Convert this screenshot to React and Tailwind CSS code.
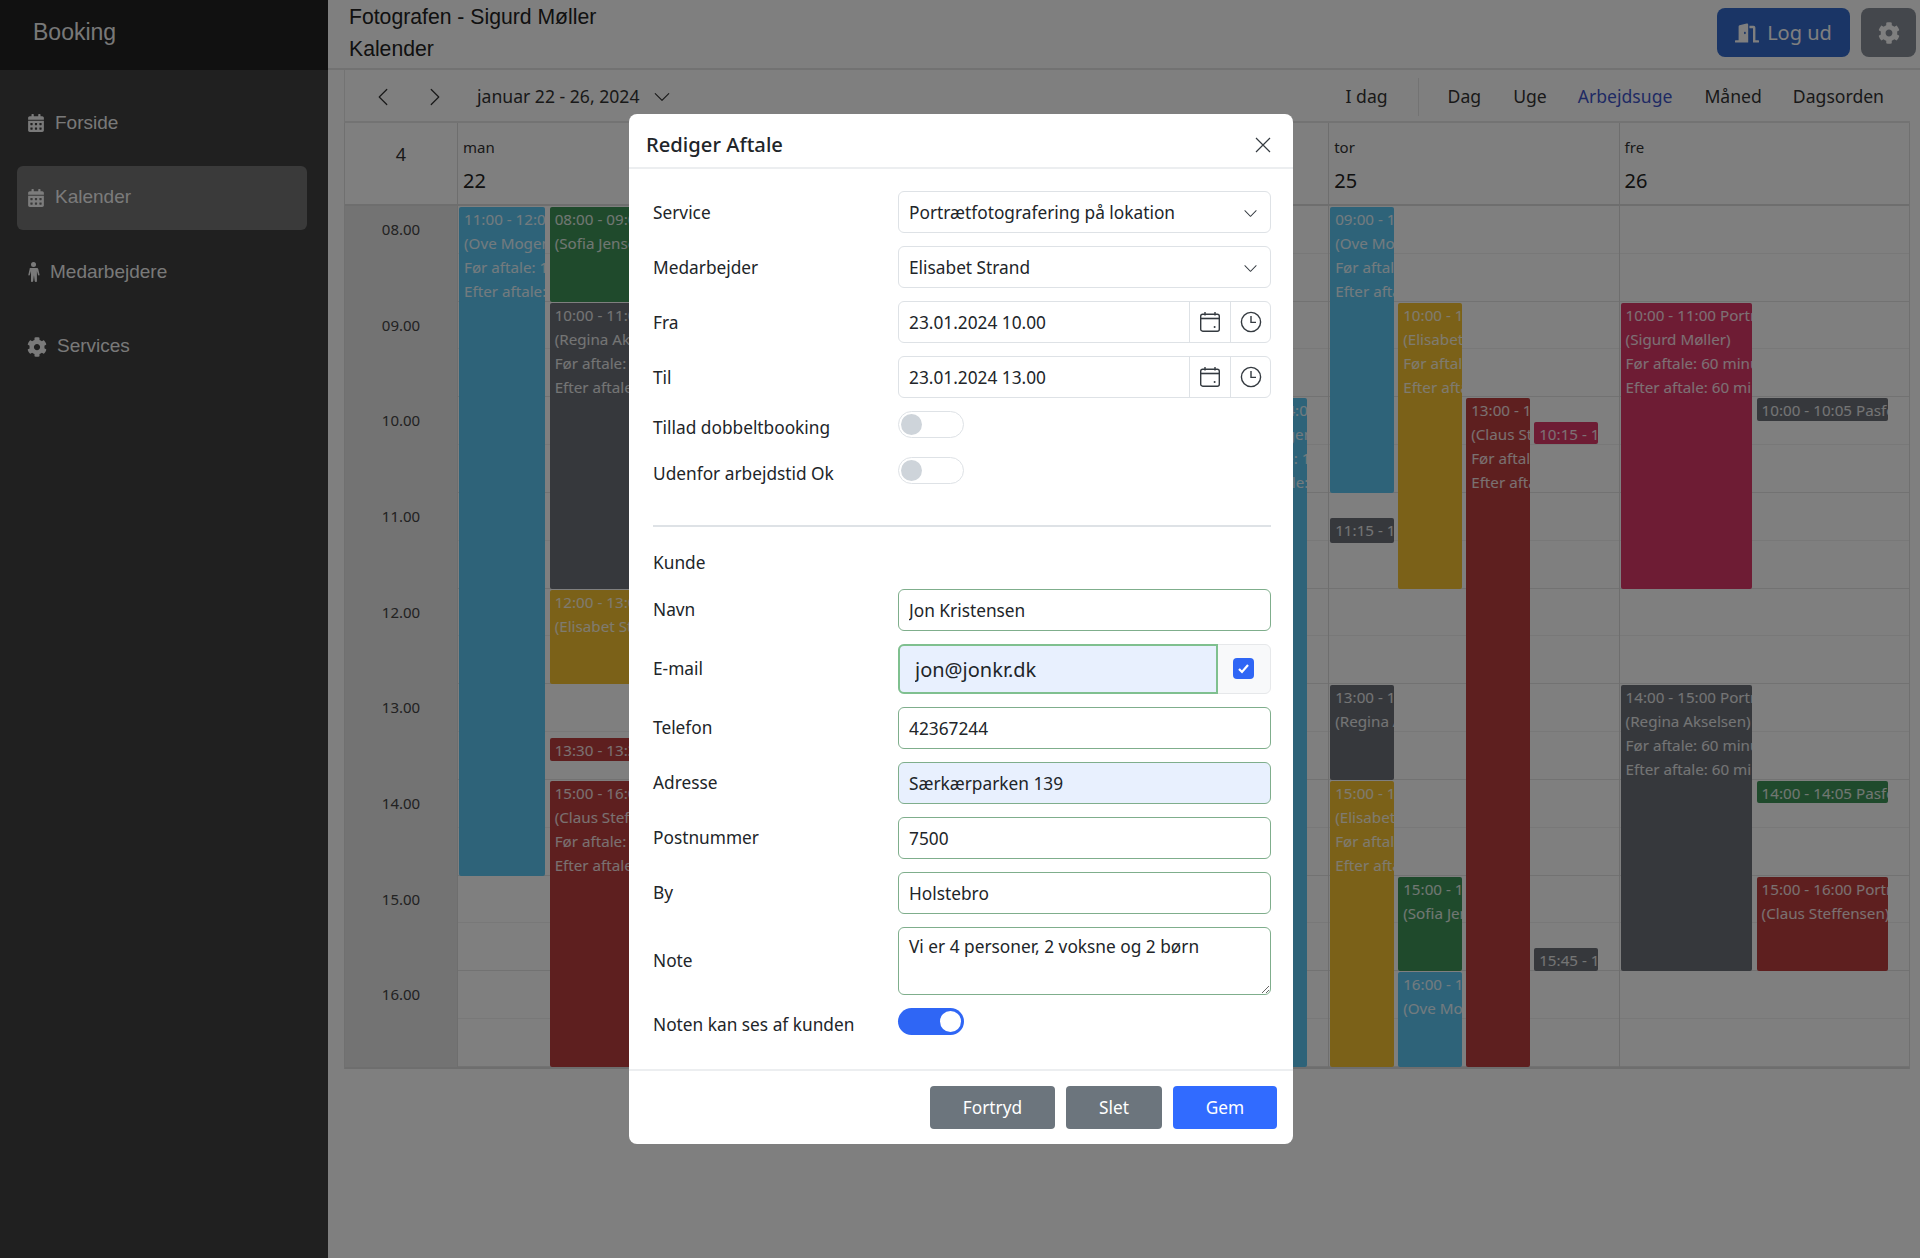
import React from "react";
import { FaCalendarAlt, FaCog, FaDoorOpen } from "react-icons/fa";
import { BsChevronLeft, BsChevronRight, BsChevronDown } from "react-icons/bs";

const HOUR = 95.67;
const blue = "bg-[#5cc6f2]";
const green = "bg-[#3e9458]";
const dark = "bg-[#6c7078]";
const yellow = "bg-[#f6c230]";
const red = "bg-[#bc3e3e]";
const pink = "bg-[#dc3868]";

const days = [
  {
    name: "man", num: "22", cols: 3,
    events: [
      { c: 0, s: 0, e: 7, color: blue, lines: ["11:00 - 12:00 Portræt", "(Ove Mogensen)", "Før aftale: 15 minutter", "Efter aftale: 15 minutter"] },
      { c: 1, s: 0, e: 1, color: green, lines: ["08:00 - 09:00 Portræt", "(Sofia Jensen)"] },
      { c: 1, s: 1, e: 4, color: dark, lines: ["10:00 - 11:00 Portræt", "(Regina Akselsen)", "Før aftale: 60 minutter", "Efter aftale: 60 minutter"] },
      { c: 1, s: 4, e: 5, color: yellow, lines: ["12:00 - 13:00 Portræt", "(Elisabet Strand)"] },
      { c: 1, s: 5.55, e: 5.8, color: red, lines: ["13:30 - 13:35 Pasfoto"] },
      { c: 1, s: 6, e: 9, color: red, lines: ["15:00 - 16:00 Portræt", "(Claus Steffensen)", "Før aftale: 60 minutter", "Efter aftale: 60 minutter"] },
    ],
  },
  { name: "tir", num: "23", cols: 3, events: [] },
  {
    name: "ons", num: "24", cols: 3,
    events: [
      { c: 2, s: 2, e: 9, color: blue, lines: ["13:00 - 14:00 Portræt", "(Ove Mogensen)", "Før aftale: 15 minutter", "Efter aftale: 15 minutter"] },
    ],
  },
  {
    name: "tor", num: "25", cols: 4,
    events: [
      { c: 0, s: 0, e: 3, color: blue, lines: ["09:00 - 10:00 Portræt", "(Ove Mogensen)", "Før aftale: 15 minutter", "Efter aftale: 15 minutter"] },
      { c: 0, s: 3.25, e: 3.52, color: dark, lines: ["11:15 - 11:20 Pasfoto"] },
      { c: 0, s: 5, e: 6, color: dark, lines: ["13:00 - 14:00 Portræt", "(Regina Akselsen)"] },
      { c: 0, s: 6, e: 9, color: yellow, lines: ["15:00 - 16:00 Portræt", "(Elisabet Strand)", "Før aftale: 60 minutter", "Efter aftale: 60 minutter"] },
      { c: 1, s: 1, e: 4, color: yellow, lines: ["10:00 - 11:00 Portræt", "(Elisabet Strand)", "Før aftale: 60 minutter", "Efter aftale: 60 minutter"] },
      { c: 1, s: 7, e: 8, color: green, lines: ["15:00 - 16:00 Portræt", "(Sofia Jensen)"] },
      { c: 1, s: 8, e: 9, color: blue, lines: ["16:00 - 17:00 Portræt", "(Ove Mogensen)"] },
      { c: 2, s: 2, e: 9, color: red, lines: ["13:00 - 14:00 Portræt", "(Claus Steffensen)", "Før aftale: 60 minutter", "Efter aftale: 60 minutter"] },
      { c: 3, s: 2.25, e: 2.49, color: pink, lines: ["10:15 - 10:20 Pasfoto"] },
      { c: 3, s: 7.75, e: 8, color: dark, lines: ["15:45 - 15:50 Pasfoto"] },
    ],
  },
  {
    name: "fre", num: "26", cols: 2,
    events: [
      { c: 0, s: 1, e: 4, color: pink, lines: ["10:00 - 11:00 Portræt", "(Sigurd Møller)", "Før aftale: 60 minutter", "Efter aftale: 60 minutter"] },
      { c: 0, s: 5, e: 8, color: dark, lines: ["14:00 - 15:00 Portræt", "(Regina Akselsen)", "Før aftale: 60 minutter", "Efter aftale: 60 minutter"] },
      { c: 1, s: 2, e: 2.25, color: dark, lines: ["10:00 - 10:05 Pasfoto"] },
      { c: 1, s: 6, e: 6.24, color: green, lines: ["14:00 - 14:05 Pasfoto"] },
      { c: 1, s: 7, e: 8, color: red, lines: ["15:00 - 16:00 Portræt", "(Claus Steffensen)"] },
    ],
  },
];

const hours = ["08.00", "09.00", "10.00", "11.00", "12.00", "13.00", "14.00", "15.00", "16.00"];

function CalIcon() {
  return (
    <svg width="22" height="22" viewBox="0 0 22 22" fill="none" stroke="#343a40" strokeWidth="1.4">
      <rect x="1.7" y="3.2" width="18.6" height="17" rx="2" />
      <path d="M1.7 7.5h18.6" strokeWidth="1.6" />
      <path d="M6 1v3.4M16 1v3.4" />
      <circle cx="15.6" cy="16" r="1" fill="#343a40" stroke="none" />
    </svg>
  );
}

function ClockIcon() {
  return (
    <svg width="22" height="22" viewBox="0 0 22 22" fill="none" stroke="#343a40" strokeWidth="1.4">
      <circle cx="11" cy="11" r="9.6" />
      <path d="M11 5v6.4h5" />
    </svg>
  );
}

function PersonIcon() {
  return (
    <svg width="13" height="20" viewBox="0 0 13 20" fill="currentColor">
      <circle cx="6.5" cy="2.6" r="2.5" />
      <path d="M3.4 6h6.2c.9 0 1.5.5 1.7 1.3l1.2 5.2c.1.6-.2 1-.7 1-.4 0-.7-.2-.8-.7L9.9 9v10c0 .6-.4 1-1 1-.7 0-1.1-.4-1.2-1l-.7-5.6h-.1L6.200 19c-.1.6-.5 1-1.200 1-.6 0-1-.4-1-1V9L2.900 12.800c-.1.500-.4.700-.8.700-.5 0-.8-.4-.7-1l1.200-5.200C2.800 6.500 2.500 6 3.400 6z" />
    </svg>
  );
}

function Row({ label, children, className = "mb-[13px]", labelClass = "" }) {
  return (
    <div className={`flex items-center ${className}`}>
      <label className={`w-[245px] shrink-0 text-[17.3px] text-[#212529] ${labelClass}`}>{label}</label>
      <div className="flex-1 min-w-0">{children}</div>
    </div>
  );
}

function SelectBox({ value }) {
  return (
    <div className="h-[42px] rounded-[6px] border border-[#dee2e6] pl-[10px] pr-[12px] pt-[2px] flex items-center justify-between text-[17.3px] text-[#212529]">
      <span>{value}</span>
      <BsChevronDown size={15} color="#343a40" />
    </div>
  );
}

function DateBox({ value }) {
  return (
    <div className="h-[42px] rounded-[6px] border border-[#dee2e6] flex items-center text-[17.3px] text-[#212529]">
      <span className="flex-1 pl-[10px] pt-[2px]">{value}</span>
      <span className="w-[41px] h-full border-l border-[#dee2e6] flex items-center justify-center"><CalIcon /></span>
      <span className="w-[40px] h-full border-l border-[#dee2e6] flex items-center justify-center"><ClockIcon /></span>
    </div>
  );
}

function TextBox({ value, autofill }) {
  return (
    <input
      readOnly
      value={value}
      className={`block w-full h-[42px] rounded-[6px] border border-[#7fae8c] pl-[10px] text-[17.3px] text-[#212529] outline-none ${autofill ? "bg-[#e8f0fe]" : "bg-white"}`}
    />
  );
}

function Toggle({ on }) {
  return on ? (
    <div className="w-[66px] h-[27px] rounded-full bg-[#2f66f5] flex items-center justify-end pr-[3px]">
      <div className="w-[21px] h-[21px] rounded-full bg-white" />
    </div>
  ) : (
    <div className="w-[66px] h-[27px] rounded-full border border-[#dee2e6] flex items-center pl-[2px]">
      <div className="w-[21px] h-[21px] rounded-full bg-[#ced4da]" />
    </div>
  );
}

function Event({ ev, cols }) {
  const step = 272 / cols;
  return (
    <div
      className={`absolute ${ev.color} rounded-[2px] overflow-hidden text-white/85 text-[15.2px] leading-[24px] pl-[5px] whitespace-nowrap`}
      style={{
        top: ev.s * HOUR + 1,
        height: (ev.e - ev.s) * HOUR - 1,
        left: ev.c * step + 1,
        width: step - 4.5,
      }}
    >
      {ev.lines.map((l) => (
        <div key={l}>{l}</div>
      ))}
    </div>
  );
}

function Calendar() {
  return (
    <div className="ml-[16px] mr-[10px] text-[#333] font-['Noto_Sans',sans-serif]">
      <div className="h-[53px] border-l border-b-[2px] border-[#e6e6e6] flex items-center pt-[2px] text-[17.6px] text-[#333]">
        <BsChevronLeft size={20} className="ml-[28px] text-[#333]" />
        <BsChevronRight size={20} className="ml-[32px] text-[#333]" />
        <span className="ml-[32px]">januar 22 - 26, 2024</span>
        <BsChevronDown size={18} className="ml-[14px] text-[#333]" />
        <div className="flex-1" />
        <span>I dag</span>
        <span className="w-px h-[38px] bg-[#e6e6e6] ml-[30px] mr-[29px]" />
        <span>Dag</span>
        <span className="ml-[32px]">Uge</span>
        <span className="ml-[31px] text-[#3f55c8]">Arbejdsuge</span>
        <span className="ml-[32px]">Måned</span>
        <span className="ml-[31px] mr-[26px]">Dagsorden</span>
      </div>
      <div className="grid grid-cols-[112px_repeat(5,1fr)] border-l border-r border-[#e0e0e0]">
        <div className="h-[83px] border-b-[2px] border-[#dcdcdc] flex justify-center pt-[18px] text-[18px]">4</div>
        {days.map((d) => (
          <div key={d.name} className="h-[83px] border-b-[2px] border-l border-[#dcdcdc] pl-[5px]">
            <div className="text-[15px] mt-[14px] leading-[20px]">{d.name}</div>
            <div className="text-[20px] mt-[10px] leading-[28px] text-[#222]">{d.num}</div>
          </div>
        ))}
        <div className="bg-[#e6e6e6] border-b-[2px] border-[#dcdcdc]">
          {hours.map((h) => (
            <div key={h} className="h-[95.67px] text-center pt-[12px] text-[15px] text-[#444] leading-[22px]">{h}</div>
          ))}
        </div>
        {days.map((d) => (
          <div key={d.name} className="relative border-l border-b-[2px] border-[#dcdcdc]">
            {hours.map((h) => (
              <div key={h} className="h-[95.67px] border-b border-[#e4e4e4]">
                <div className="h-[47.8px] border-b border-[#f0f0f0]" />
              </div>
            ))}
            {d.events.map((ev) => (
              <Event key={ev.lines[0] + ev.c} ev={ev} cols={d.cols} />
            ))}
          </div>
        ))}
      </div>
    </div>
  );
}

function NavItem({ icon, label, active, gap }) {
  return (
    <div className={`h-[64px] ml-[17px] mr-[21px] px-[10px] flex items-center rounded-[6px] text-[19px] text-white/95 ${active ? "bg-[#747474]" : ""}`} style={{ gap }}>
      {icon}
      <span>{label}</span>
    </div>
  );
}

function Modal() {
  return (
    <div className="w-[664px] ml-[2px] h-[1030px] bg-white rounded-[8px] font-['Noto_Sans',sans-serif] text-[#212529]">
      <div className="h-[45px] border-b-[2px] border-[#eceef0] pl-[17px] pr-[22px] pt-[8px] flex items-center justify-between box-content">
        <span className="text-[20.2px] font-medium">Rediger Aftale</span>
        <svg width="16" height="16" viewBox="0 0 16 16" stroke="#343a40" strokeWidth="1.2"><path d="M1 1l14 14M15 1L1 15" /></svg>
      </div>
      <div className="pl-[24px] pr-[22px] pt-[22px]">
        <Row label="Service" labelClass="pt-[2px]"><SelectBox value="Portrætfotografering på lokation" /></Row>
        <Row label="Medarbejder" labelClass="pt-[2px]"><SelectBox value="Elisabet Strand" /></Row>
        <Row label="Fra" labelClass="pt-[2px]"><DateBox value="23.01.2024 10.00" /></Row>
        <Row label="Til" labelClass="pt-[2px]"><DateBox value="23.01.2024 13.00" /></Row>
        <div className="flex items-start h-[27px] mb-[19px] mt-[13px]">
          <label className="w-[245px] shrink-0 text-[17.3px] pt-[4px]">Tillad dobbeltbooking</label>
          <Toggle />
        </div>
        <div className="flex items-start h-[27px]">
          <label className="w-[245px] shrink-0 text-[17.3px] pt-[4px]">Udenfor arbejdstid Ok</label>
          <Toggle />
        </div>
        <hr className="mt-[41px] border-t-[2px] border-[#dee2e6]" />
        <div className="mt-[24px] h-[24px] text-[17.3px] leading-[24px] mb-[14px]">Kunde</div>
        <Row label="Navn" className="mb-[13px]"><TextBox value="Jon Kristensen" /></Row>
        <Row label="E-mail">
          <div className="flex h-[50px] rounded-[6px] border border-[#e6e8ea] bg-[#f8f9fa]">
            <input readOnly value="jon@jonkr.dk" className="w-[320px] -m-px h-[50px] rounded-l-[6px] border-2 border-[#7fc08f] bg-[#e8f0fe] pl-[15px] text-[20px] text-[#212529] outline-none" />
            <div className="flex-1 flex items-center justify-center pb-[2px]">
              <div className="w-[21px] h-[21px] rounded-[4px] bg-[#2f66f5] flex items-center justify-center">
                <svg width="13" height="13" viewBox="0 0 13 13" fill="none" stroke="#fff" strokeWidth="2.2"><path d="M2 7l3 3 6-7" /></svg>
              </div>
            </div>
          </div>
        </Row>
        <Row label="Telefon"><TextBox value="42367244" /></Row>
        <Row label="Adresse"><TextBox value="Særkærparken 139" autofill /></Row>
        <Row label="Postnummer"><TextBox value="7500" /></Row>
        <Row label="By"><TextBox value="Holstebro" /></Row>
        <Row label="Note">
          <textarea
            readOnly
            value="Vi er 4 personer, 2 voksne og 2 børn"
            className="block w-full h-[68px] rounded-[6px] border border-[#7fae8c] pl-[10px] pt-[6px] text-[17.3px] text-[#212529] outline-none resize-y"
          />
        </Row>
        <div className="flex items-start h-[27px]">
          <label className="w-[245px] shrink-0 text-[17.3px] pt-[4px]">Noten kan ses af kunden</label>
          <Toggle on />
        </div>
      </div>
      <div className="mt-[34px] border-t-[2px] border-[#eceef0] pt-[15px] pr-[16px] flex justify-end gap-[11px] text-[17.3px] text-white">
        <button className="w-[125px] h-[43px] rounded-[4px] bg-[#6c757d]">Fortryd</button>
        <button className="w-[96px] h-[43px] rounded-[4px] bg-[#6c757d]">Slet</button>
        <button className="w-[104px] h-[43px] rounded-[4px] bg-[#316bff]">Gem</button>
      </div>
    </div>
  );
}

export default function App() {
  return (
    <div className="h-screen flex bg-white overflow-hidden font-['Liberation_Sans',sans-serif]">
      <aside className="w-[328px] shrink-0 bg-[#404040] text-white">
        <div className="h-[70px] bg-[#222] flex items-center pl-[33px] pb-[6px] text-[23px] text-white/95">Booking</div>
        <nav className="pt-[21px] flex flex-col gap-[10.5px]">
          <NavItem icon={<FaCalendarAlt size={18} />} label="Forside" gap="10px" />
          <NavItem icon={<FaCalendarAlt size={18} />} label="Kalender" active gap="10px" />
          <NavItem icon={<PersonIcon />} label="Medarbejdere" gap="10px" />
          <NavItem icon={<FaCog size={20} />} label="Services" gap="10px" />
        </nav>
      </aside>
      <main className="flex-1 min-w-0 flex flex-col">
        <header className="h-[70px] shrink-0 border-b-[2px] border-[#e4e4e4] flex items-start pl-[21px] pr-[4px] pt-[8px] justify-between box-border">
          <div className="-mt-[7px] text-[21.2px] leading-[32px] text-[#222]">
            <div>Fotografen - Sigurd Møller</div>
            <div>Kalender</div>
          </div>
          <div className="flex gap-[11px]">
            <button className="w-[133px] h-[49px] rounded-[8px] bg-[#346bcc] text-white flex items-center justify-center gap-[8px] text-[20px] font-['Noto_Sans',sans-serif]">
              <FaDoorOpen size={24} /> Log ud
            </button>
            <button className="w-[55px] h-[49px] rounded-[8px] bg-[#888e98] text-white flex items-center justify-center">
              <FaCog size={22} />
            </button>
          </div>
        </header>
        <Calendar />
      </main>
      <div className="fixed inset-0 bg-black/50 flex justify-center items-start pt-[114px]">
        <Modal />
      </div>
    </div>
  );
}
